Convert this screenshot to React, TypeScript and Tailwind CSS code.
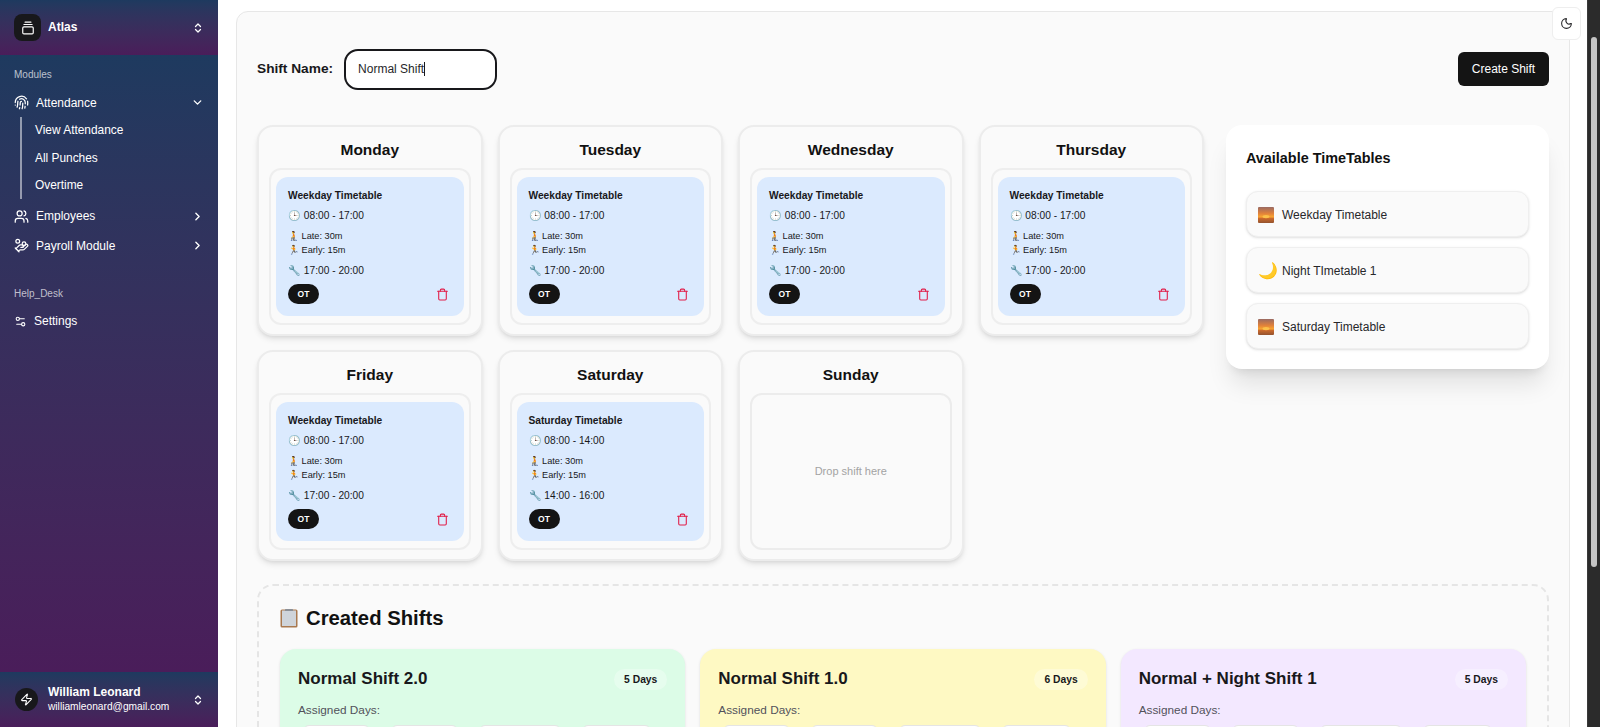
import {
  ChevronDown,
  ChevronRight,
  ChevronsUpDown,
  Fingerprint,
  GalleryVerticalEnd,
  HandCoins,
  Moon,
  Settings2,
  Trash,
  Users,
  Zap,
} from "lucide-react";

type Slot = { title: string; time: string; ot: string };

const weekday: Slot = { title: "Weekday Timetable", time: "08:00 - 17:00", ot: "17:00 - 20:00" };
const saturday: Slot = { title: "Saturday Timetable", time: "08:00 - 14:00", ot: "14:00 - 16:00" };

const days: { name: string; slot?: Slot }[] = [
  { name: "Monday", slot: weekday },
  { name: "Tuesday", slot: weekday },
  { name: "Wednesday", slot: weekday },
  { name: "Thursday", slot: weekday },
  { name: "Friday", slot: weekday },
  { name: "Saturday", slot: saturday },
  { name: "Sunday" },
];

const shifts = [
  { name: "Normal Shift 2.0", count: "5 Days", bg: "bg-[#dcfce7]" },
  { name: "Normal Shift 1.0", count: "6 Days", bg: "bg-[#fef9c3]" },
  { name: "Normal + Night Shift 1", count: "5 Days", bg: "bg-[#f3e8ff]" },
];

// only the top edge of these chips is on screen
const chipWidths = ["w-[67px]", "w-[67px]", "w-[82px]", "w-[69px]"];

function SunsetIcon() {
  return (
    <svg width="16" height="16" viewBox="0 0 16 16" className="shrink-0">
      <defs>
        <linearGradient id="sunset-sky" x1="0" y1="0" x2="0" y2="1">
          <stop offset="0" stopColor="#9a6a62" />
          <stop offset="0.4" stopColor="#e0813a" />
          <stop offset="0.62" stopColor="#f9a531" />
          <stop offset="0.72" stopColor="#c9692c" />
          <stop offset="1" stopColor="#94532f" />
        </linearGradient>
      </defs>
      <rect width="16" height="16" rx="1" fill="url(#sunset-sky)" />
      <ellipse cx="8" cy="9.6" rx="3.5" ry="1.6" fill="#fbc04a" />
    </svg>
  );
}

function ClipboardIcon() {
  return (
    <svg width="18" height="19" viewBox="0 0 18 19" className="shrink-0">
      <rect x="0.5" y="0.5" width="17" height="18" rx="1.5" fill="#a9794f" />
      <rect x="2" y="1.5" width="14" height="15.5" fill="#cfd4da" />
      <rect x="5" y="0" width="8" height="2" rx="0.5" fill="#8b8f96" />
    </svg>
  );
}

function Sidebar() {
  return (
    <aside className="flex h-full w-[218px] shrink-0 flex-col text-white">
      <div className="flex h-[55px] items-start bg-linear-to-b from-[#1e3a5f] to-[#4a1d5a] pl-[14px] pr-[14px] pt-[14px]">
        <div className="flex size-[27px] items-center justify-center rounded-lg bg-[#18181b]">
          <GalleryVerticalEnd size={14} />
        </div>
        <span className="ml-[7px] mt-[5px] flex-1 text-xs font-bold">Atlas</span>
        <ChevronsUpDown size={12} strokeWidth={2.5} className="mt-[8px]" />
      </div>

      <div className="flex-1 bg-linear-to-b from-[#1e3a5f] to-[#4a1d5a] px-[14px] pt-[13px]">
        <p className="text-[10px] leading-[14px] text-white/70">Modules</p>
        <div className="mt-[6px] flex h-[29px] items-center text-xs">
          <Fingerprint size={15} />
          <span className="ml-[7px] flex-1">Attendance</span>
          <ChevronDown size={13} strokeWidth={2.5} />
        </div>
        <div className="ml-[6px] flex w-[150px] flex-col border-l-2 border-white/50 pl-[13px] text-[11.9px]">
          <span className="flex h-[28px] items-center">View Attendance</span>
          <span className="flex h-[27px] items-center">All Punches</span>
          <span className="flex h-[27px] items-center">Overtime</span>
        </div>
        <div className="mt-[3px] flex h-[28px] items-center text-xs">
          <Users size={15} />
          <span className="ml-[7px] flex-1">Employees</span>
          <ChevronRight size={13} strokeWidth={2.5} />
        </div>
        <div className="flex h-[31px] items-center text-xs">
          <HandCoins size={15} />
          <span className="ml-[7px] flex-1">Payroll Module</span>
          <ChevronRight size={13} strokeWidth={2.5} />
        </div>
        <p className="mt-[26px] text-[10px] leading-[14px] text-white/70">Help_Desk</p>
        <div className="mt-[6px] flex h-[28px] items-center text-xs">
          <Settings2 size={13} />
          <span className="ml-[7px]">Settings</span>
        </div>
      </div>

      <div className="flex h-[55px] items-center bg-linear-to-b from-[#1e3a5f] to-[#4a1d5a] pl-[15px] pr-[14px]">
        <div className="flex size-[23px] items-center justify-center rounded-full bg-[#18181b]">
          <Zap size={13} />
        </div>
        <div className="ml-[10px] flex-1">
          <p className="text-xs font-bold leading-[15px]">William Leonard</p>
          <p className="text-[10.2px] leading-[14px]">williamleonard@gmail.com</p>
        </div>
        <ChevronsUpDown size={12} strokeWidth={2.5} />
      </div>
    </aside>
  );
}

function SlotCard({ slot }: { slot: Slot }) {
  return (
    <div className="flex h-full flex-col rounded-xl bg-[#dbeafe] px-[12px] pt-[12px] text-[#18181b]">
      <p className="text-[10.2px] font-bold leading-[14px]">{slot.title}</p>
      <p className="mt-[6px] text-[10.2px] leading-[14px]">🕒 {slot.time}</p>
      <p className="mt-[6px] text-[9.2px] leading-[14px]">🧎 Late: 30m</p>
      <p className="text-[9.2px] leading-[14px]">🏃 Early: 15m</p>
      <p className="mt-[7px] text-[10.2px] leading-[14px]">🔧 {slot.ot}</p>
      <div className="mt-[6px] flex items-center justify-between pr-[3px]">
        <span className="flex h-[20px] w-[31px] items-center justify-center rounded-full bg-[#141414] text-[8.5px] font-bold text-white">
          OT
        </span>
        <Trash size={13} className="text-[#e11d48]" />
      </div>
    </div>
  );
}

function DayCard({ name, slot }: { name: string; slot?: Slot }) {
  return (
    <div className="flex flex-col rounded-2xl border-2 border-[#ececec] bg-[#fafafa] px-[10px] pb-[9px] shadow-md">
      <h3 className="flex h-[41px] items-center justify-center pt-[4px] text-[15.5px] font-bold text-[#111]">{name}</h3>
      {slot ? (
        <div className="h-[157px] rounded-xl border-2 border-[#eeeeee] px-[5px] py-[7px]">
          <SlotCard slot={slot} />
        </div>
      ) : (
        <div className="flex h-[157px] items-center justify-center rounded-xl border-2 border-[#ececec] text-[11px] text-[#a3a3a3]">
          Drop shift here
        </div>
      )}
    </div>
  );
}

function Timetables() {
  const items = [
    { icon: <SunsetIcon />, label: "Weekday Timetable" },
    { icon: <span className="w-[16px] text-base leading-none">🌙</span>, label: "Night TImetable 1" },
    { icon: <SunsetIcon />, label: "Saturday Timetable" },
  ];
  return (
    <div className="h-[244px] w-[323px] shrink-0 rounded-2xl bg-white px-[20px] pt-[22px] shadow-xl">
      <h3 className="text-[14.4px] font-bold leading-[22px] text-[#111]">Available TimeTables</h3>
      <div className="mt-[22px] flex flex-col gap-[10px]">
        {items.map((item) => (
          <div
            key={item.label}
            className="flex h-[46px] items-center gap-[8px] rounded-xl border border-[#efefef] bg-[#fafafa] px-[11px] pt-[1px] text-xs text-[#27272a] shadow-sm"
          >
            {item.icon}
            {item.label}
          </div>
        ))}
      </div>
    </div>
  );
}

export default function App() {
  return (
    <div className="relative flex h-[727px] overflow-hidden bg-white font-['Liberation_Sans',Arial,sans-serif]">
      <Sidebar />

      <main className="h-full flex-1 overflow-hidden pl-[18px] pr-[17px] pt-[11px]">
        <div className="rounded-xl border border-[#e7e7e7] bg-[#fafafa] px-[20px] pb-[20px] pt-[37px]">
          <div className="flex h-[41px] items-center">
            <label className="text-[13.7px] font-bold text-[#18181b]">Shift Name:</label>
            <div className="ml-[11px] flex h-[41px] w-[153px] items-center rounded-[14px] border-2 border-[#18181b] bg-white pb-[1px] pl-[12px] text-xs text-[#27272a]">
              Normal Shift
              <span className="h-[14px] w-px bg-[#18181b]" />
            </div>
            <button className="mb-[2px] ml-auto flex h-[34px] w-[91px] items-center justify-center rounded-md bg-[#141414] text-xs font-medium text-white">
              Create Shift
            </button>
          </div>

          <div className="mt-[35px] flex items-start justify-between">
            <div className="grid w-[947px] grid-cols-4 gap-x-[15px] gap-y-[14px]">
              {days.map((d) => (
                <DayCard key={d.name} name={d.name} slot={d.slot} />
              ))}
            </div>
            <Timetables />
          </div>

          <section className="mt-[23px] rounded-2xl border-2 border-dashed border-[#e5e5e5] pb-[20px] pl-[21px] pr-[21px] pt-[18px]">
            <h2 className="flex items-center gap-[8px] text-[20.3px] font-bold leading-[28px] text-[#111]">
              <ClipboardIcon />
              Created Shifts
            </h2>
            <div className="mt-[17px] grid grid-cols-3 gap-[15px]">
              {shifts.map((s) => (
                <div key={s.name} className={`rounded-2xl px-[18px] pb-[18px] pt-[18px] shadow-sm ${s.bg}`}>
                  <div className="flex items-center justify-between">
                    <h3 className="text-[17px] font-bold leading-[24px] text-[#18181b]">{s.name}</h3>
                    <span className="rounded-full bg-white/30 px-[10px] py-[3px] text-[10.3px] font-bold leading-[15px] text-[#18181b]">{s.count}</span>
                  </div>
                  <p className="mt-[11px] text-[11.8px] leading-[16px] text-[#52525b]">Assigned Days:</p>
                  <div className="ml-[5px] mt-[7px] flex gap-[21px]">
                    {chipWidths.map((w, i) => (
                      <span key={i} className={`h-[28px] rounded-md border border-[#e5e5e5] bg-white ${w}`} />
                    ))}
                  </div>
                </div>
              ))}
            </div>
          </section>
        </div>
      </main>

      <button className="absolute right-[19px] top-[7px] flex h-[33px] w-[29px] items-center justify-center rounded-md border border-[#eeeeee] bg-white text-[#27272a]">
        <Moon size={13} />
      </button>

      <div className="h-full w-[13px] shrink-0 border-l border-[#3a3a3a] bg-[#2b2b2b] px-[3px] pt-[37px]">
        <div className="h-[530px] rounded-full bg-[#c4c4c4]" />
      </div>
    </div>
  );
}
